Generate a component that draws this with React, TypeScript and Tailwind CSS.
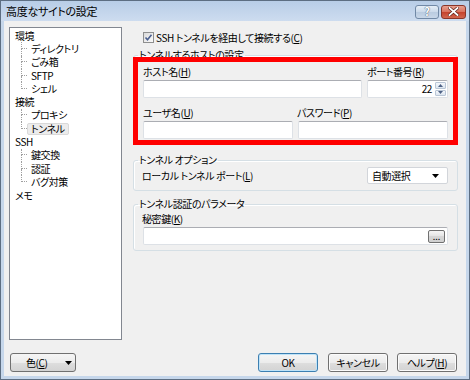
import React from 'react';

const F = "font-['Noto_Sans_CJK_JP',sans-serif] [font-feature-settings:'palt']";

function U({ c }: { c: string }) {
  return (
    <span>
      (<span className="underline underline-offset-[1px]">{c}</span>)
    </span>
  );
}

function Box({ className = '', children }: { className?: string; children?: React.ReactNode }) {
  return (
    <div className={`h-[18px] bg-white border border-[#dde1e6] border-t-[#abadb3] rounded-[2px] ${className}`}>
      {children}
    </div>
  );
}

const btn =
  'h-[19px] rounded-[3px] border bg-[linear-gradient(#f5f5f5,#ececec_50%,#dedede_50%,#d3d3d3)] flex items-center justify-center text-black';

type Item = { t: string; lvl: number; last?: boolean; sel?: boolean };
const items: Item[] = [
  { t: '環境', lvl: 0 },
  { t: 'ディレクトリ', lvl: 1 },
  { t: 'ごみ箱', lvl: 1 },
  { t: 'SFTP', lvl: 1 },
  { t: 'シェル', lvl: 1, last: true },
  { t: '接続', lvl: 0 },
  { t: 'プロキシ', lvl: 1 },
  { t: 'トンネル', lvl: 1, last: true, sel: true },
  { t: 'SSH', lvl: 0 },
  { t: '鍵交換', lvl: 1 },
  { t: '認証', lvl: 1 },
  { t: 'バグ対策', lvl: 1, last: true },
  { t: 'メモ', lvl: 0 },
];

function Tree() {
  return (
    <div className="w-[113px] h-full bg-white border border-[#828790] pt-[1px] pl-[5px] leading-[13.3px]">
      {items.map((it, i) =>
        it.lvl === 0 ? (
          <div key={i} className="h-[13.3px] flex items-center">
            {it.t}
          </div>
        ) : (
          <div key={i} className="h-[13.3px] flex items-stretch">
            <div className="ml-[6px] w-[6px] flex flex-col">
              <div className="h-1/2 border-l border-b border-dotted border-[#a0a0a0]" />
              <div className={`flex-1 ${it.last ? '' : 'border-l border-dotted border-[#a0a0a0]'}`} />
            </div>
            <div className="flex items-center">
              <span
                className={`px-[3px] h-[12px] leading-[12px] flex items-center rounded-[2px] border ${
                  it.sel ? 'border-[#d9d9d9] bg-[#ececec]' : 'border-transparent'
                }`}
              >
                {it.t}
              </span>
            </div>
          </div>
        )
      )}
    </div>
  );
}

function Tri({ color = '#000' }: { color?: string }) {
  return (
    <svg width="7" height="4" viewBox="0 0 7 4">
      <path d="M0 0 H7 L3.5 4 Z" fill={color} />
    </svg>
  );
}

function Group({
  label,
  className = '',
  children,
}: {
  label: string;
  className?: string;
  children: React.ReactNode;
}) {
  return (
    <fieldset className={`border border-[#d5dfe5] rounded-[3px] shadow-[inset_1px_1px_0_#ffffff] ${className}`}>
      <legend className="ml-[4px] px-[1px] leading-[12px] h-[12px]">{label}</legend>
      {children}
    </fieldset>
  );
}

export default function App() {
  return (
    <div
      className={`w-[470px] h-[380px] flex flex-col border border-[#5d6e82] bg-[#c6d7eb] text-black text-[10px] tracking-[-0.4px] ${F}`}
    >
      {/* title bar */}
      <div className="h-[20px] flex items-center pl-[5px] pr-[3px] bg-[linear-gradient(#b8cde7,#cddcef)]">
        <span className="text-[11px] leading-[14px] tracking-[-0.3px]">高度なサイトの設定</span>
        <div className="flex-1" />
        <div className="w-[24px] h-[14px] mt-[1px] rounded-[3px] border border-[#7189a6] bg-[linear-gradient(#e6eef7,#cbd9ea_50%,#b9cbe0_50%,#c8d7e9)] flex items-center justify-center">
          <span className="text-[11px] leading-[11px] font-bold text-white [text-shadow:0_0_1px_#4a5a70,0_0_1px_#4a5a70]">
            ?
          </span>
        </div>
        <div className="ml-[2px] w-[25px] h-[14px] mt-[1px] rounded-[3px] border border-[#8a3528] bg-[linear-gradient(#e8a090,#d9705b_50%,#c5412b_50%,#d2654d)] flex items-center justify-center">
          <svg width="11" height="9" viewBox="0 0 11 9">
            <path d="M1.5 1 L9.5 8 M9.5 1 L1.5 8" stroke="#5a2018" strokeWidth="3.2" strokeLinecap="square" />
            <path d="M1.5 1 L9.5 8 M9.5 1 L1.5 8" stroke="#ffffff" strokeWidth="1.8" strokeLinecap="square" />
          </svg>
        </div>
      </div>

      {/* client area */}
      <div className="flex-1 mx-[3px] mb-[3px] bg-[#f0f0f0] pt-[6px] pl-[5px] pr-[8px] pb-[4px] flex flex-col">
        <div className="flex-1 flex gap-[11px] min-h-0">
          <Tree />

          <div className="relative flex-1 flex flex-col">
            <div className="mt-[4px] h-[13px] flex items-center ml-[10px]">
              <div className="w-[11px] h-[11px] border border-[#8e8f8f] bg-[linear-gradient(135deg,#dadada,#fbfbfb)] flex items-center justify-center">
                <svg width="9" height="9" viewBox="0 0 9 9">
                  <path d="M1.5 4.5 L3.5 6.8 L7.5 1.8" stroke="#4a5f8f" strokeWidth="1.6" fill="none" />
                </svg>
              </div>
              <span className="ml-[2px] leading-[13px]">
                SSH トンネルを経由して接続する<U c="C" />
              </span>
            </div>

            <Group label="トンネルするホストの設定" className="mt-[5px]">
              <div className="px-[9px] pt-[5px] pb-[3px]">
                <div className="flex gap-[5px]">
                  <div className="flex-1 flex flex-col">
                    <div className="h-[12px] leading-[12px]">
                      ホスト名<U c="H" />
                    </div>
                    <Box className="mt-[2px]" />
                  </div>
                  <div className="w-[81px] flex flex-col">
                    <div className="h-[12px] leading-[12px]">
                      ポート番号<U c="R" />
                    </div>
                    <Box className="mt-[2px] flex items-stretch">
                      <span className="flex-1 text-right pr-[3px] leading-[16px]">22</span>
                      <div className="w-[12px] flex flex-col gap-[1px] py-[1px] pr-[1px]">
                        <div className="flex-1 rounded-[1px] border border-[#b9c6d6] bg-[linear-gradient(#f4f7fb,#dde6f0)] flex items-center justify-center">
                          <svg width="5" height="3" viewBox="0 0 5 3">
                            <path d="M0 3 H5 L2.5 0 Z" fill="#4d6185" />
                          </svg>
                        </div>
                        <div className="flex-1 rounded-[1px] border border-[#b9c6d6] bg-[linear-gradient(#f4f7fb,#dde6f0)] flex items-center justify-center">
                          <svg width="5" height="3" viewBox="0 0 5 3">
                            <path d="M0 0 H5 L2.5 3 Z" fill="#4d6185" />
                          </svg>
                        </div>
                      </div>
                    </Box>
                  </div>
                </div>
                <div className="flex gap-[5px] mt-[9px]">
                  <div className="w-[150px] flex flex-col">
                    <div className="h-[12px] leading-[12px]">
                      ユーザ名<U c="U" />
                    </div>
                    <Box className="mt-[2px]" />
                  </div>
                  <div className="flex-1 flex flex-col">
                    <div className="h-[12px] leading-[12px] -ml-[1px]">
                      パスワード<U c="P" />
                    </div>
                    <Box className="mt-[2px]" />
                  </div>
                </div>
              </div>
            </Group>

            <Group label="トンネル オプション" className="mt-[11px]">
              <div className="px-[9px] pt-[1px] pb-[6px] flex items-center justify-between">
                <span className="-ml-[1px] leading-[12px]">
                  ローカル トンネル ポート<U c="L" />
                </span>
                <div className="w-[81px] h-[17px] bg-white border border-[#d2d5da] rounded-[2px] flex items-center justify-between pl-[4px] pr-[8px]">
                  <span className="leading-[12px]">自動選択</span>
                  <Tri />
                </div>
              </div>
            </Group>

            <Group label="トンネル認証のパラメータ" className="mt-[7px]">
              <div className="px-[9px] pt-[3px] pb-[5px]">
                <div className="h-[12px] leading-[12px] -ml-[1px]">
                  秘密鍵<U c="K" />
                </div>
                <Box className="mt-[2px] flex items-center justify-end pr-[2px]">
                  <div className="w-[17px] h-[13px] rounded-[2px] border border-[#707070] bg-[linear-gradient(#f5f5f5,#e3e3e3_50%,#d6d6d6_50%,#d0d0d0)] flex items-end justify-center text-[9px] leading-[9px] pb-[1px] tracking-normal">
                    ...
                  </div>
                </Box>
              </div>
            </Group>

            {/* annotation overlay */}
            <div className="absolute left-0 top-[30px] w-[325px] h-[88px] border-[5px] border-[#ff0000] pointer-events-none" />
          </div>
        </div>

        <div className="mt-[13px] h-[19px] flex pr-[1px]">
          <div className={`${btn} ml-[1px] w-[66px] border-[#707070] !justify-start pl-[15px] pr-[3px]`}>
            <span>
              色<U c="C" />
            </span>
            <div className="flex-1" />
            <Tri />
          </div>
          <div className="flex-1" />
          <div className={`${btn} w-[60px] border-[#3c7fb1] shadow-[inset_0_0_0_1px_#bfe3f8]`}>OK</div>
          <div className={`${btn} ml-[10px] w-[60px] border-[#707070] shadow-[inset_0_0_0_1px_#fbfbfb]`}>キャンセル</div>
          <div className={`${btn} ml-[9px] w-[60px] border-[#707070] shadow-[inset_0_0_0_1px_#fbfbfb]`}>
            <span>
              ヘルプ<U c="H" />
            </span>
          </div>
        </div>
      </div>
    </div>
  );
}
